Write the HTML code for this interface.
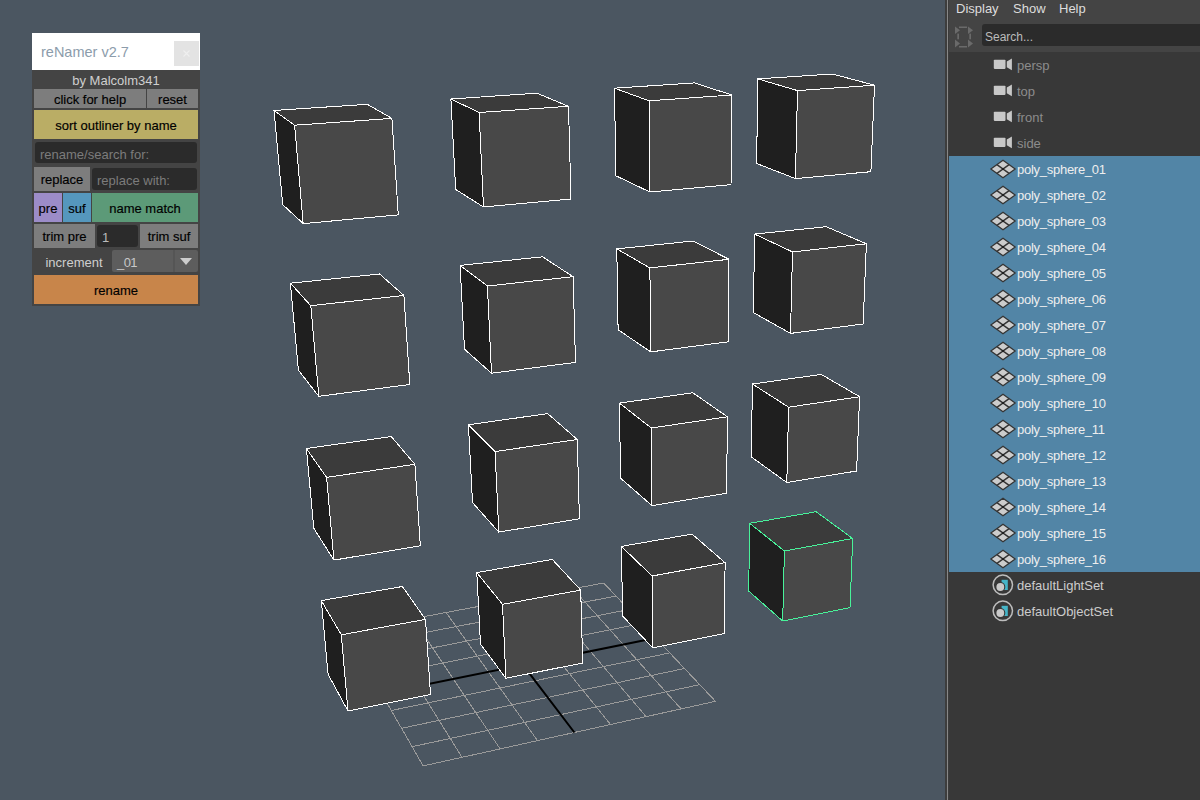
<!DOCTYPE html>
<html><head><meta charset="utf-8">
<style>
*{box-sizing:border-box;margin:0;padding:0}
html,body{width:1200px;height:800px;overflow:hidden;background:#4b5661;font-family:"Liberation Sans",sans-serif;position:relative}
.abs{position:absolute}
#vp{position:absolute;left:0;top:0;width:945px;height:800px}
/* outliner */
#ol{position:absolute;left:945px;top:0;width:255px;height:800px;background:#383838}
#ol .bl1{position:absolute;left:0;top:0;width:2px;height:800px;background:#3d3d3d;z-index:5}
#ol .bl2{position:absolute;left:2px;top:0;width:1px;height:800px;background:#878787;z-index:5}
#ol .bl3{position:absolute;left:3px;top:0;width:1px;height:800px;background:#3b3b3b;z-index:5}
#menu{position:absolute;left:3px;top:0;width:252px;height:52px;background:#444}
.mi{position:absolute;top:1px;font-size:13px;color:#ddd;line-height:16px}
#srch{position:absolute;left:34px;top:24px;width:230px;height:22px;background:#2b2b2b;border-radius:3px}
#srch span{position:absolute;left:3px;top:5px;font-size:12px;color:#bbb;line-height:16px}
.row{position:absolute;left:3px;width:252px;height:26px}
.row.sel{background:#5285a6}
.row .t{position:absolute;left:69px;top:6px;font-size:13px;line-height:16px;white-space:nowrap}
.row .ic{position:absolute;left:45px;top:4px}
/* renamer */
#rn{position:absolute;left:32px;top:33px;width:168px;height:273px;background:#444}
#rn .title{position:absolute;left:0;top:0;width:168px;height:37px;background:#fff}
#rn .title span{position:absolute;left:9px;top:10px;font-size:14.5px;color:#8c9cab;line-height:18px}
#rn .close{position:absolute;left:142px;top:8px;width:25px;height:25px;background:#e3e3e3}
.b{position:absolute;font-size:13px;line-height:16px;color:#000;-webkit-text-stroke:0.15px #000;text-align:center;white-space:nowrap}
.b span{position:absolute;left:0;right:0;top:50%;transform:translateY(-50%);margin-top:1px}
.fld{position:absolute;background:#2b2b2b;border-radius:3px;font-size:13px;color:#7c7c7c;white-space:nowrap}
.fld span{position:absolute;left:5px;top:50%;transform:translateY(-50%);margin-top:1px}
</style></head><body>
<svg id="vp" width="945" height="800" viewBox="0 0 945 800" shape-rendering="geometricPrecision">
<path d="M345.7,631.3L423.2,765.9M345.7,631.3L603.7,583.0M379.7,625.0L462.0,757.3M354.2,646.0L616.0,596.1M413.1,618.7L500.1,748.9M363.0,661.3L628.8,609.6M446.1,612.5L537.5,740.6M372.1,677.1L642.0,623.5M510.5,600.5L610.5,724.5M391.3,710.5L669.8,652.9M542.0,594.6L646.1,716.6M401.5,728.3L684.5,668.5M573.1,588.8L681.1,708.9M412.1,746.7L699.7,684.6M603.7,583.0L715.5,701.3M423.2,765.9L715.5,701.3" stroke="#9a9a9a" stroke-width="1" fill="none" shape-rendering="crispEdges"/>
<path d="M478.5,606.5L574.4,732.5M381.5,693.5L655.6,638.0" stroke="#000" stroke-width="2" fill="none"/>
<path d="M274.0,110.5L367.2,104.3L391.9,118.4L294.6,125.2Z" fill="#3b3b3b"/>
<path d="M294.6,125.2L391.9,118.4L398.3,214.9L303.2,223.6Z" fill="#484848"/>
<path d="M274.0,110.5L294.6,125.2L303.2,223.6L282.7,204.6Z" fill="#1f1f1f"/>
<path d="M274.0,110.5L367.2,104.3L391.9,118.4L398.3,214.9L303.2,223.6L282.7,204.6ZM274.0,110.5L294.6,125.2L391.9,118.4M294.6,125.2L303.2,223.6" stroke="#ffffff" stroke-width="1" fill="none" shape-rendering="crispEdges"/>
<path d="M450.9,99.0L537.0,93.2L568.5,106.3L479.1,112.5Z" fill="#3b3b3b"/>
<path d="M479.1,112.5L568.5,106.3L571.0,199.0L483.5,207.0Z" fill="#484848"/>
<path d="M450.9,99.0L479.1,112.5L483.5,207.0L455.7,189.5Z" fill="#1f1f1f"/>
<path d="M450.9,99.0L537.0,93.2L568.5,106.3L571.0,199.0L483.5,207.0L455.7,189.5ZM450.9,99.0L479.1,112.5L568.5,106.3M479.1,112.5L483.5,207.0" stroke="#ffffff" stroke-width="1" fill="none" shape-rendering="crispEdges"/>
<path d="M614.5,88.2L694.4,82.9L731.9,95.0L649.0,100.8Z" fill="#3b3b3b"/>
<path d="M649.0,100.8L731.9,95.0L731.0,184.6L649.9,192.0Z" fill="#484848"/>
<path d="M614.5,88.2L649.0,100.8L649.9,192.0L615.9,175.8Z" fill="#1f1f1f"/>
<path d="M614.5,88.2L694.4,82.9L731.9,95.0L731.0,184.6L649.9,192.0L615.9,175.8ZM614.5,88.2L649.0,100.8L731.9,95.0M649.0,100.8L649.9,192.0" stroke="#ffffff" stroke-width="1" fill="none" shape-rendering="crispEdges"/>
<path d="M757.9,78.9L832.4,74.0L874.5,85.2L797.5,90.6Z" fill="#3b3b3b"/>
<path d="M797.5,90.6L874.5,85.2L870.9,171.7L795.4,178.6Z" fill="#484848"/>
<path d="M757.9,78.9L797.5,90.6L795.4,178.6L756.6,163.5Z" fill="#1f1f1f"/>
<path d="M757.9,78.9L832.4,74.0L874.5,85.2L870.9,171.7L795.4,178.6L756.6,163.5ZM757.9,78.9L797.5,90.6L874.5,85.2M797.5,90.6L795.4,178.6" stroke="#ffffff" stroke-width="1" fill="none" shape-rendering="crispEdges"/>
<path d="M290.4,283.2L379.6,274.0L403.9,295.5L310.8,305.7Z" fill="#3b3b3b"/>
<path d="M310.8,305.7L403.9,295.5L409.8,384.5L318.8,396.3Z" fill="#484848"/>
<path d="M290.4,283.2L310.8,305.7L318.8,396.3L298.4,370.2Z" fill="#1f1f1f"/>
<path d="M290.4,283.2L379.6,274.0L403.9,295.5L409.8,384.5L318.8,396.3L298.4,370.2ZM290.4,283.2L310.8,305.7L403.9,295.5M310.8,305.7L318.8,396.3" stroke="#ffffff" stroke-width="1" fill="none" shape-rendering="crispEdges"/>
<path d="M460.1,265.4L542.6,256.8L573.1,276.7L487.4,286.0Z" fill="#3b3b3b"/>
<path d="M487.4,286.0L573.1,276.7L575.5,362.4L491.5,373.2Z" fill="#484848"/>
<path d="M460.1,265.4L487.4,286.0L491.5,373.2L464.5,349.2Z" fill="#1f1f1f"/>
<path d="M460.1,265.4L542.6,256.8L573.1,276.7L575.5,362.4L491.5,373.2L464.5,349.2ZM460.1,265.4L487.4,286.0L573.1,276.7M487.4,286.0L491.5,373.2" stroke="#ffffff" stroke-width="1" fill="none" shape-rendering="crispEdges"/>
<path d="M616.8,248.9L693.2,241.0L729.0,259.3L649.9,267.9Z" fill="#3b3b3b"/>
<path d="M649.9,267.9L729.0,259.3L728.3,341.8L650.7,351.9Z" fill="#484848"/>
<path d="M616.8,248.9L649.9,267.9L650.7,351.9L618.1,329.7Z" fill="#1f1f1f"/>
<path d="M616.8,248.9L693.2,241.0L729.0,259.3L728.3,341.8L650.7,351.9L618.1,329.7ZM616.8,248.9L649.9,267.9L729.0,259.3M649.9,267.9L650.7,351.9" stroke="#ffffff" stroke-width="1" fill="none" shape-rendering="crispEdges"/>
<path d="M754.6,234.1L826.2,226.7L866.4,243.8L792.5,251.9Z" fill="#3b3b3b"/>
<path d="M792.5,251.9L866.4,243.8L863.1,324.0L790.5,333.4Z" fill="#484848"/>
<path d="M754.6,234.1L792.5,251.9L790.5,333.4L753.4,312.6Z" fill="#1f1f1f"/>
<path d="M754.6,234.1L826.2,226.7L866.4,243.8L863.1,324.0L790.5,333.4L753.4,312.6ZM754.6,234.1L792.5,251.9L866.4,243.8M792.5,251.9L790.5,333.4" stroke="#ffffff" stroke-width="1" fill="none" shape-rendering="crispEdges"/>
<path d="M306.4,448.5L391.3,436.6L414.9,464.3L326.6,477.4Z" fill="#3b3b3b"/>
<path d="M326.6,477.4L414.9,464.3L420.3,545.8L333.9,560.1Z" fill="#484848"/>
<path d="M306.4,448.5L326.6,477.4L333.9,560.1L313.8,528.3Z" fill="#1f1f1f"/>
<path d="M306.4,448.5L391.3,436.6L414.9,464.3L420.3,545.8L333.9,560.1L313.8,528.3ZM306.4,448.5L326.6,477.4L414.9,464.3M326.6,477.4L333.9,560.1" stroke="#ffffff" stroke-width="1" fill="none" shape-rendering="crispEdges"/>
<path d="M468.4,424.8L547.7,413.6L577.3,439.5L495.1,451.6Z" fill="#3b3b3b"/>
<path d="M495.1,451.6L577.3,439.5L579.4,518.8L498.8,532.1Z" fill="#484848"/>
<path d="M468.4,424.8L495.1,451.6L498.8,532.1L472.5,502.5Z" fill="#1f1f1f"/>
<path d="M468.4,424.8L547.7,413.6L577.3,439.5L579.4,518.8L498.8,532.1L472.5,502.5ZM468.4,424.8L495.1,451.6L577.3,439.5M495.1,451.6L498.8,532.1" stroke="#ffffff" stroke-width="1" fill="none" shape-rendering="crispEdges"/>
<path d="M619.4,403.1L692.9,392.8L727.4,416.8L651.3,428.0Z" fill="#3b3b3b"/>
<path d="M651.3,428.0L727.4,416.8L726.6,493.3L652.0,505.7Z" fill="#484848"/>
<path d="M619.4,403.1L651.3,428.0L652.0,505.7L620.6,478.2Z" fill="#1f1f1f"/>
<path d="M619.4,403.1L692.9,392.8L727.4,416.8L726.6,493.3L652.0,505.7L620.6,478.2ZM619.4,403.1L651.3,428.0L727.4,416.8M651.3,428.0L652.0,505.7" stroke="#ffffff" stroke-width="1" fill="none" shape-rendering="crispEdges"/>
<path d="M752.4,384.0L821.3,374.4L859.6,396.7L788.6,407.2Z" fill="#3b3b3b"/>
<path d="M788.6,407.2L859.6,396.7L856.6,471.0L786.8,482.5Z" fill="#484848"/>
<path d="M752.4,384.0L788.6,407.2L786.8,482.5L751.3,456.9Z" fill="#1f1f1f"/>
<path d="M752.4,384.0L821.3,374.4L859.6,396.7L856.6,471.0L786.8,482.5L751.3,456.9ZM752.4,384.0L788.6,407.2L859.6,396.7M788.6,407.2L786.8,482.5" stroke="#ffffff" stroke-width="1" fill="none" shape-rendering="crispEdges"/>
<path d="M321.3,600.6L402.4,586.5L425.5,619.4L341.3,634.8Z" fill="#3b3b3b"/>
<path d="M341.3,634.8L425.5,619.4L430.5,694.6L348.0,711.0Z" fill="#484848"/>
<path d="M321.3,600.6L341.3,634.8L348.0,711.0L328.1,674.3Z" fill="#1f1f1f"/>
<path d="M321.3,600.6L402.4,586.5L425.5,619.4L430.5,694.6L348.0,711.0L328.1,674.3ZM321.3,600.6L341.3,634.8L425.5,619.4M341.3,634.8L348.0,711.0" stroke="#ffffff" stroke-width="1" fill="none" shape-rendering="crispEdges"/>
<path d="M476.8,572.6L552.3,559.4L580.7,590.1L502.5,604.3Z" fill="#3b3b3b"/>
<path d="M502.5,604.3L580.7,590.1L582.7,663.0L505.9,678.3Z" fill="#484848"/>
<path d="M476.8,572.6L502.5,604.3L505.9,678.3L480.5,644.1Z" fill="#1f1f1f"/>
<path d="M476.8,572.6L552.3,559.4L580.7,590.1L582.7,663.0L505.9,678.3L480.5,644.1ZM476.8,572.6L502.5,604.3L580.7,590.1M502.5,604.3L505.9,678.3" stroke="#ffffff" stroke-width="1" fill="none" shape-rendering="crispEdges"/>
<path d="M621.4,546.4L692.1,534.1L725.1,562.7L652.1,576.0Z" fill="#3b3b3b"/>
<path d="M652.1,576.0L725.1,562.7L724.4,633.6L652.8,647.9Z" fill="#484848"/>
<path d="M621.4,546.4L652.1,576.0L652.8,647.9L622.6,616.0Z" fill="#1f1f1f"/>
<path d="M621.4,546.4L692.1,534.1L725.1,562.7L724.4,633.6L652.8,647.9L622.6,616.0ZM621.4,546.4L652.1,576.0L725.1,562.7M652.1,576.0L652.8,647.9" stroke="#ffffff" stroke-width="1" fill="none" shape-rendering="crispEdges"/>
<path d="M749.7,523.3L816.1,511.7L852.7,538.5L784.4,551.0Z" fill="#3b3b3b"/>
<path d="M784.4,551.0L852.7,538.5L850.0,607.6L782.7,621.0Z" fill="#484848"/>
<path d="M749.7,523.3L784.4,551.0L782.7,621.0L748.7,591.1Z" fill="#1f1f1f"/>
<path d="M749.7,523.3L816.1,511.7L852.7,538.5L850.0,607.6L782.7,621.0L748.7,591.1ZM749.7,523.3L784.4,551.0L852.7,538.5M784.4,551.0L782.7,621.0" stroke="#48f29a" stroke-width="1" fill="none" shape-rendering="crispEdges"/>
</svg>

<div id="rn">
  <div class="title"><span>reNamer v2.7</span><div class="close"><svg width="25" height="25" style="position:absolute;left:0;top:0"><path d="M9.5 9.5L15.5 15.5M15.5 9.5L9.5 15.5" stroke="#efefef" stroke-width="1.1"/></svg></div></div>
  <div class="b" style="left:0;top:38px;width:168px;height:18px;color:#cfcfcf;-webkit-text-stroke:0"><span>by Malcolm341</span></div>
  <div class="b" style="left:2px;top:56px;width:112px;height:19px;background:#7d7d7d"><span>click for help</span></div>
  <div class="b" style="left:115px;top:56px;width:51px;height:19px;background:#7d7d7d"><span>reset</span></div>
  <div class="b" style="left:2px;top:77px;width:164px;height:29px;background:#baad65"><span>sort outliner by name</span></div>
  <div class="fld" style="left:3px;top:109px;width:162px;height:21px"><span style="margin-top:1.5px">rename/search for:</span></div>
  <div class="b" style="left:2px;top:134px;width:56px;height:24px;background:#7d7d7d"><span>replace</span></div>
  <div class="fld" style="left:60px;top:135px;width:105px;height:22px"><span>replace with:</span></div>
  <div class="b" style="left:2px;top:160px;width:28px;height:29px;background:#9c8cc8"><span>pre</span></div>
  <div class="b" style="left:31px;top:160px;width:28px;height:29px;background:#5597bd"><span>suf</span></div>
  <div class="b" style="left:60px;top:160px;width:106px;height:29px;background:#5c9a78"><span>name match</span></div>
  <div class="b" style="left:2px;top:191px;width:61px;height:24px;background:#7d7d7d"><span>trim pre</span></div>
  <div class="fld" style="left:65px;top:192px;width:41px;height:22px;color:#bbb"><span>1</span></div>
  <div class="b" style="left:108px;top:191px;width:58px;height:24px;background:#7d7d7d"><span>trim suf</span></div>
  <div class="b" style="left:2px;top:218px;width:80px;height:22px;color:#cfcfcf;-webkit-text-stroke:0"><span>increment</span></div>
  <div class="abs" style="left:80px;top:217px;width:86px;height:22px;background:#5d5d5d;border-radius:2px"></div>
  <div class="abs" style="left:141px;top:217px;width:2px;height:22px;background:#555"></div>
  <div class="b" style="left:85px;top:218px;width:40px;height:22px;color:#c8c8c8;text-align:left;-webkit-text-stroke:0;letter-spacing:-0.6px"><span>_01</span></div>
  <div class="abs" style="left:148px;top:225px;width:0;height:0;border-left:6px solid transparent;border-right:6px solid transparent;border-top:7px solid #ccc"></div>
  <div class="b" style="left:2px;top:242px;width:164px;height:29px;background:#c8854a"><span>rename</span></div>
</div>

<div id="ol">
  <div class="bl1"></div><div class="bl2"></div><div class="bl3"></div>
  <div id="menu">
    <div class="mi" style="left:8px">Display</div>
    <div class="mi" style="left:65px">Show</div>
    <div class="mi" style="left:111px">Help</div>
    <svg style="position:absolute;left:6px;top:25px" width="20" height="23" viewBox="0 0 20 23"><g fill="#6a6a6a"><rect x="5" y="1.5" width="8" height="1.5"/><rect x="5" y="21" width="8" height="1.5"/><rect x="3.3" y="8.6" width="1.7" height="5.7"/><rect x="15.3" y="8.6" width="1.7" height="5.7"/><path d="M1 1.5L6 5.3L1 9Z"/><path d="M14 1.5L19 5.3L14 9Z"/><path d="M1 14.6L6 18.6L1 22.5Z"/><path d="M14 14.6L19 18.6L14 22.5Z"/></g></svg>
    <div id="srch"><span>Search...</span></div>
  </div>
<div class="row" style="top:52px"><svg class="ic" width="22" height="18" viewBox="0 0 22 18"><rect x="0.8" y="3.8" width="11.7" height="9.1" rx="0.8" fill="#c8c8c8"/><path d="M13.8 5.6 L18.9 2.4 V14.3 L13.8 11.2Z" fill="#c8c8c8"/></svg><div class="t" style="color:#8c8c8c">persp</div></div>
<div class="row" style="top:78px"><svg class="ic" width="22" height="18" viewBox="0 0 22 18"><rect x="0.8" y="3.8" width="11.7" height="9.1" rx="0.8" fill="#c8c8c8"/><path d="M13.8 5.6 L18.9 2.4 V14.3 L13.8 11.2Z" fill="#c8c8c8"/></svg><div class="t" style="color:#8c8c8c">top</div></div>
<div class="row" style="top:104px"><svg class="ic" width="22" height="18" viewBox="0 0 22 18"><rect x="0.8" y="3.8" width="11.7" height="9.1" rx="0.8" fill="#c8c8c8"/><path d="M13.8 5.6 L18.9 2.4 V14.3 L13.8 11.2Z" fill="#c8c8c8"/></svg><div class="t" style="color:#8c8c8c">front</div></div>
<div class="row" style="top:130px"><svg class="ic" width="22" height="18" viewBox="0 0 22 18"><rect x="0.8" y="3.8" width="11.7" height="9.1" rx="0.8" fill="#c8c8c8"/><path d="M13.8 5.6 L18.9 2.4 V14.3 L13.8 11.2Z" fill="#c8c8c8"/></svg><div class="t" style="color:#8c8c8c">side</div></div>
<div class="row sel" style="top:156px"><svg style="position:absolute;left:40px;top:3px" width="30" height="20" viewBox="-15 -10 30 20"><path d="M0 -8.8L12.2 0L0 8.8L-12.2 0Z" fill="#cccccc" stroke="#353535" stroke-width="1.3" stroke-linejoin="round"/><path d="M-6.1 -4.4L6.1 4.4M6.1 -4.4L-6.1 4.4" stroke="#353535" stroke-width="1.5"/><circle cx="0" cy="0" r="1.1" fill="#1a1a1a"/></svg><div class="t" style="color:#eee;letter-spacing:-0.27px">poly_sphere_01</div></div>
<div class="row sel" style="top:182px"><svg style="position:absolute;left:40px;top:3px" width="30" height="20" viewBox="-15 -10 30 20"><path d="M0 -8.8L12.2 0L0 8.8L-12.2 0Z" fill="#cccccc" stroke="#353535" stroke-width="1.3" stroke-linejoin="round"/><path d="M-6.1 -4.4L6.1 4.4M6.1 -4.4L-6.1 4.4" stroke="#353535" stroke-width="1.5"/><circle cx="0" cy="0" r="1.1" fill="#1a1a1a"/></svg><div class="t" style="color:#eee;letter-spacing:-0.27px">poly_sphere_02</div></div>
<div class="row sel" style="top:208px"><svg style="position:absolute;left:40px;top:3px" width="30" height="20" viewBox="-15 -10 30 20"><path d="M0 -8.8L12.2 0L0 8.8L-12.2 0Z" fill="#cccccc" stroke="#353535" stroke-width="1.3" stroke-linejoin="round"/><path d="M-6.1 -4.4L6.1 4.4M6.1 -4.4L-6.1 4.4" stroke="#353535" stroke-width="1.5"/><circle cx="0" cy="0" r="1.1" fill="#1a1a1a"/></svg><div class="t" style="color:#eee;letter-spacing:-0.27px">poly_sphere_03</div></div>
<div class="row sel" style="top:234px"><svg style="position:absolute;left:40px;top:3px" width="30" height="20" viewBox="-15 -10 30 20"><path d="M0 -8.8L12.2 0L0 8.8L-12.2 0Z" fill="#cccccc" stroke="#353535" stroke-width="1.3" stroke-linejoin="round"/><path d="M-6.1 -4.4L6.1 4.4M6.1 -4.4L-6.1 4.4" stroke="#353535" stroke-width="1.5"/><circle cx="0" cy="0" r="1.1" fill="#1a1a1a"/></svg><div class="t" style="color:#eee;letter-spacing:-0.27px">poly_sphere_04</div></div>
<div class="row sel" style="top:260px"><svg style="position:absolute;left:40px;top:3px" width="30" height="20" viewBox="-15 -10 30 20"><path d="M0 -8.8L12.2 0L0 8.8L-12.2 0Z" fill="#cccccc" stroke="#353535" stroke-width="1.3" stroke-linejoin="round"/><path d="M-6.1 -4.4L6.1 4.4M6.1 -4.4L-6.1 4.4" stroke="#353535" stroke-width="1.5"/><circle cx="0" cy="0" r="1.1" fill="#1a1a1a"/></svg><div class="t" style="color:#eee;letter-spacing:-0.27px">poly_sphere_05</div></div>
<div class="row sel" style="top:286px"><svg style="position:absolute;left:40px;top:3px" width="30" height="20" viewBox="-15 -10 30 20"><path d="M0 -8.8L12.2 0L0 8.8L-12.2 0Z" fill="#cccccc" stroke="#353535" stroke-width="1.3" stroke-linejoin="round"/><path d="M-6.1 -4.4L6.1 4.4M6.1 -4.4L-6.1 4.4" stroke="#353535" stroke-width="1.5"/><circle cx="0" cy="0" r="1.1" fill="#1a1a1a"/></svg><div class="t" style="color:#eee;letter-spacing:-0.27px">poly_sphere_06</div></div>
<div class="row sel" style="top:312px"><svg style="position:absolute;left:40px;top:3px" width="30" height="20" viewBox="-15 -10 30 20"><path d="M0 -8.8L12.2 0L0 8.8L-12.2 0Z" fill="#cccccc" stroke="#353535" stroke-width="1.3" stroke-linejoin="round"/><path d="M-6.1 -4.4L6.1 4.4M6.1 -4.4L-6.1 4.4" stroke="#353535" stroke-width="1.5"/><circle cx="0" cy="0" r="1.1" fill="#1a1a1a"/></svg><div class="t" style="color:#eee;letter-spacing:-0.27px">poly_sphere_07</div></div>
<div class="row sel" style="top:338px"><svg style="position:absolute;left:40px;top:3px" width="30" height="20" viewBox="-15 -10 30 20"><path d="M0 -8.8L12.2 0L0 8.8L-12.2 0Z" fill="#cccccc" stroke="#353535" stroke-width="1.3" stroke-linejoin="round"/><path d="M-6.1 -4.4L6.1 4.4M6.1 -4.4L-6.1 4.4" stroke="#353535" stroke-width="1.5"/><circle cx="0" cy="0" r="1.1" fill="#1a1a1a"/></svg><div class="t" style="color:#eee;letter-spacing:-0.27px">poly_sphere_08</div></div>
<div class="row sel" style="top:364px"><svg style="position:absolute;left:40px;top:3px" width="30" height="20" viewBox="-15 -10 30 20"><path d="M0 -8.8L12.2 0L0 8.8L-12.2 0Z" fill="#cccccc" stroke="#353535" stroke-width="1.3" stroke-linejoin="round"/><path d="M-6.1 -4.4L6.1 4.4M6.1 -4.4L-6.1 4.4" stroke="#353535" stroke-width="1.5"/><circle cx="0" cy="0" r="1.1" fill="#1a1a1a"/></svg><div class="t" style="color:#eee;letter-spacing:-0.27px">poly_sphere_09</div></div>
<div class="row sel" style="top:390px"><svg style="position:absolute;left:40px;top:3px" width="30" height="20" viewBox="-15 -10 30 20"><path d="M0 -8.8L12.2 0L0 8.8L-12.2 0Z" fill="#cccccc" stroke="#353535" stroke-width="1.3" stroke-linejoin="round"/><path d="M-6.1 -4.4L6.1 4.4M6.1 -4.4L-6.1 4.4" stroke="#353535" stroke-width="1.5"/><circle cx="0" cy="0" r="1.1" fill="#1a1a1a"/></svg><div class="t" style="color:#eee;letter-spacing:-0.27px">poly_sphere_10</div></div>
<div class="row sel" style="top:416px"><svg style="position:absolute;left:40px;top:3px" width="30" height="20" viewBox="-15 -10 30 20"><path d="M0 -8.8L12.2 0L0 8.8L-12.2 0Z" fill="#cccccc" stroke="#353535" stroke-width="1.3" stroke-linejoin="round"/><path d="M-6.1 -4.4L6.1 4.4M6.1 -4.4L-6.1 4.4" stroke="#353535" stroke-width="1.5"/><circle cx="0" cy="0" r="1.1" fill="#1a1a1a"/></svg><div class="t" style="color:#eee;letter-spacing:-0.27px">poly_sphere_11</div></div>
<div class="row sel" style="top:442px"><svg style="position:absolute;left:40px;top:3px" width="30" height="20" viewBox="-15 -10 30 20"><path d="M0 -8.8L12.2 0L0 8.8L-12.2 0Z" fill="#cccccc" stroke="#353535" stroke-width="1.3" stroke-linejoin="round"/><path d="M-6.1 -4.4L6.1 4.4M6.1 -4.4L-6.1 4.4" stroke="#353535" stroke-width="1.5"/><circle cx="0" cy="0" r="1.1" fill="#1a1a1a"/></svg><div class="t" style="color:#eee;letter-spacing:-0.27px">poly_sphere_12</div></div>
<div class="row sel" style="top:468px"><svg style="position:absolute;left:40px;top:3px" width="30" height="20" viewBox="-15 -10 30 20"><path d="M0 -8.8L12.2 0L0 8.8L-12.2 0Z" fill="#cccccc" stroke="#353535" stroke-width="1.3" stroke-linejoin="round"/><path d="M-6.1 -4.4L6.1 4.4M6.1 -4.4L-6.1 4.4" stroke="#353535" stroke-width="1.5"/><circle cx="0" cy="0" r="1.1" fill="#1a1a1a"/></svg><div class="t" style="color:#eee;letter-spacing:-0.27px">poly_sphere_13</div></div>
<div class="row sel" style="top:494px"><svg style="position:absolute;left:40px;top:3px" width="30" height="20" viewBox="-15 -10 30 20"><path d="M0 -8.8L12.2 0L0 8.8L-12.2 0Z" fill="#cccccc" stroke="#353535" stroke-width="1.3" stroke-linejoin="round"/><path d="M-6.1 -4.4L6.1 4.4M6.1 -4.4L-6.1 4.4" stroke="#353535" stroke-width="1.5"/><circle cx="0" cy="0" r="1.1" fill="#1a1a1a"/></svg><div class="t" style="color:#eee;letter-spacing:-0.27px">poly_sphere_14</div></div>
<div class="row sel" style="top:520px"><svg style="position:absolute;left:40px;top:3px" width="30" height="20" viewBox="-15 -10 30 20"><path d="M0 -8.8L12.2 0L0 8.8L-12.2 0Z" fill="#cccccc" stroke="#353535" stroke-width="1.3" stroke-linejoin="round"/><path d="M-6.1 -4.4L6.1 4.4M6.1 -4.4L-6.1 4.4" stroke="#353535" stroke-width="1.5"/><circle cx="0" cy="0" r="1.1" fill="#1a1a1a"/></svg><div class="t" style="color:#eee;letter-spacing:-0.27px">poly_sphere_15</div></div>
<div class="row sel" style="top:546px"><svg style="position:absolute;left:40px;top:3px" width="30" height="20" viewBox="-15 -10 30 20"><path d="M0 -8.8L12.2 0L0 8.8L-12.2 0Z" fill="#cccccc" stroke="#353535" stroke-width="1.3" stroke-linejoin="round"/><path d="M-6.1 -4.4L6.1 4.4M6.1 -4.4L-6.1 4.4" stroke="#353535" stroke-width="1.5"/><circle cx="0" cy="0" r="1.1" fill="#1a1a1a"/></svg><div class="t" style="color:#eee;letter-spacing:-0.27px">poly_sphere_16</div></div>
<div class="row" style="top:572px"><svg style="position:absolute;left:43px;top:1px" width="24" height="24" viewBox="0 0 24 24"><circle cx="11.8" cy="11.8" r="9.7" fill="none" stroke="#bdbdbd" stroke-width="1.5"/><rect x="10.6" y="6.8" width="6.2" height="10.2" fill="#45b5c8"/><circle cx="9.3" cy="14" r="5" fill="#383838"/><circle cx="9.3" cy="14" r="3.9" fill="#cacaca"/></svg><div class="t" style="color:#ccc">defaultLightSet</div></div>
<div class="row" style="top:598px"><svg style="position:absolute;left:43px;top:1px" width="24" height="24" viewBox="0 0 24 24"><circle cx="11.8" cy="11.8" r="9.7" fill="none" stroke="#bdbdbd" stroke-width="1.5"/><rect x="10.6" y="6.8" width="6.2" height="10.2" fill="#45b5c8"/><circle cx="9.3" cy="14" r="5" fill="#383838"/><circle cx="9.3" cy="14" r="3.9" fill="#cacaca"/></svg><div class="t" style="color:#ccc">defaultObjectSet</div></div>
</div>
</body></html>
